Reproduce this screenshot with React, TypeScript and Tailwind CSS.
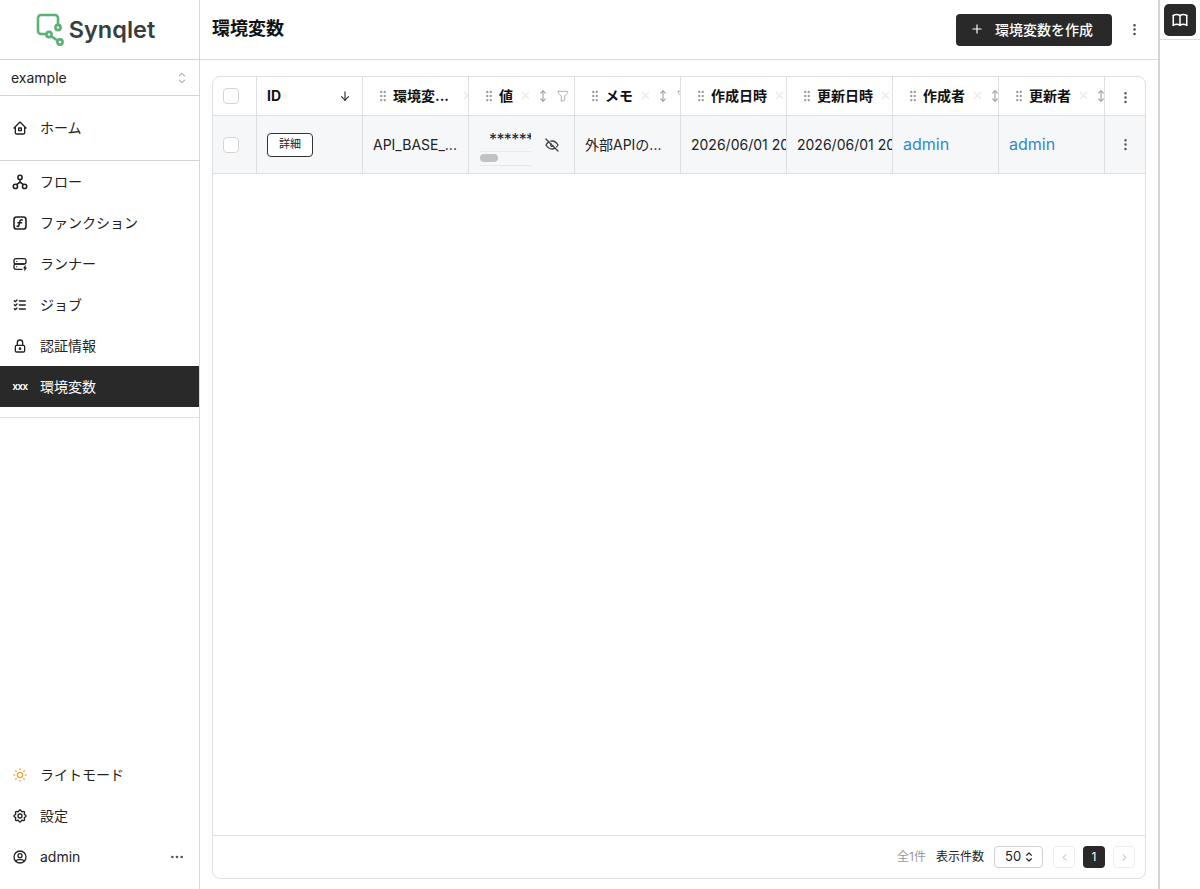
import { ReactNode } from 'react'
import {
  TbArrowDown,
  TbArrowsVertical,
  TbBook,
  TbChevronLeft,
  TbChevronRight,
  TbDots,
  TbDotsVertical,
  TbEyeOff,
  TbFilter,
  TbGripVertical,
  TbHome2,
  TbListCheck,
  TbLock,
  TbPlus,
  TbSelector,
  TbServerBolt,
  TbSettings,
  TbSun,
  TbUserCircle,
  TbX,
} from 'react-icons/tb'

const font = "font-['Inter','Noto_Sans_CJK_JP',sans-serif]"

const FlowIcon = () => (
  <svg width="16" height="16" viewBox="0 0 16 16" fill="none" stroke="currentColor" strokeWidth="1.6">
    <circle cx="8" cy="3.4" r="2.1" />
    <circle cx="3.4" cy="12.4" r="2.1" />
    <circle cx="12.6" cy="12.4" r="2.1" />
    <path d="M8 5.5 V8 M4.6 10.6 L8 8 L11.4 10.6" />
  </svg>
)

const FunctionIcon = () => (
  <svg width="16" height="16" viewBox="0 0 16 16" fill="none" stroke="currentColor" strokeWidth="1.6" strokeLinecap="round">
    <rect x="2" y="2" width="12" height="12" rx="2.6" />
    <path d="M10.2 5 C8.8 4.5 8 5.2 7.8 6.4 L7 10 C6.8 11.2 6 11.6 5.2 11.2 M6 7.8 H9.6" />
  </svg>
)

const NavItem = ({
  icon,
  label,
  active,
}: {
  icon: ReactNode
  label: string
  active?: boolean
}) => (
  <div
    className={`flex h-[41px] items-center px-3 text-[14px] ${
      active ? 'bg-[#292929] text-white' : 'text-[#222]'
    }`}
  >
    <span className="flex w-4 justify-center">{icon}</span>
    <span className="ml-3">{label}</span>
  </div>
)

const Logo = () => (
  <div className="flex h-[60px] items-center justify-center border-b border-[#d4d4d4] pr-2">
    <svg width="32" height="34" viewBox="0 0 32 34" fill="none" stroke="#5cb176" strokeWidth="2.6">
      <path d="M22 12 V5 a3 3 0 0 0 -3 -3 H5 a3 3 0 0 0 -3 3 V18 a3 3 0 0 0 3 3 H9" strokeLinecap="round" />
      <circle cx="22" cy="14.5" r="2.6" />
      <circle cx="13" cy="21.5" r="2.6" />
      <circle cx="24" cy="29" r="2.6" />
      <path d="M15.5 23.5 L21.5 27.5" />
    </svg>
    <span className="ml-px text-[23.5px] leading-none font-semibold text-[#353f42]">Synqlet</span>
  </div>
)

const Sidebar = () => (
  <aside className="flex h-full w-[200px] shrink-0 flex-col border-r border-[#d9d9d9]">
    <Logo />
    <div className="flex h-[36px] items-center justify-between border-b border-[#d4d4d4] pr-[9px] pl-[11px] text-[14px] text-[#222]">
      example
      <TbSelector size={16} strokeWidth={1.5} className="text-[#888]" />
    </div>
    <div className="flex h-[65px] flex-col justify-center border-b border-[#d4d4d4] pb-[1px]">
      <NavItem icon={<TbHome2 size={16} />} label="ホーム" />
    </div>
    <div className="border-b border-[#e0e0e0] pb-[10px]">
      <NavItem icon={<FlowIcon />} label="フロー" />
      <NavItem icon={<FunctionIcon />} label="ファンクション" />
      <NavItem icon={<TbServerBolt size={16} />} label="ランナー" />
      <NavItem icon={<TbListCheck size={16} />} label="ジョブ" />
      <NavItem icon={<TbLock size={16} />} label="認証情報" />
      <NavItem
        active
        icon={<span className="font-['Roboto',sans-serif] text-[11px] leading-none font-medium tracking-[-0.5px]">xxx</span>}
        label="環境変数"
      />
    </div>
    <div className="mt-auto pb-[12px]">
      <NavItem icon={<TbSun size={16} className="text-[#eda23a]" />} label="ライトモード" />
      <NavItem icon={<TbSettings size={16} />} label="設定" />
      <div className="flex h-[41px] items-center justify-between pr-3.5 pl-3 text-[14px] text-[#222]">
        <div className="flex items-center">
          <span className="flex w-4 justify-center">
            <TbUserCircle size={16} />
          </span>
          <span className="ml-3">admin</span>
        </div>
        <TbDots size={16} className="text-[#555]" />
      </div>
    </div>
  </aside>
)

const Checkbox = () => (
  <span className="block h-4 w-4 rounded-[4px] border border-[#d4d4d4] bg-white" />
)

const HeaderCell = ({
  label,
  sort,
  filter,
  truncated,
}: {
  label: string
  sort?: boolean
  filter?: boolean
  truncated?: boolean
}) => (
  <div className="flex h-full w-[106px] shrink-0 items-center overflow-hidden border-r border-[#dcdfe3] pb-[1px] pl-[13px]">
    <TbGripVertical size={14} className="shrink-0 text-[#999]" />
    <span className={`ml-[3px] shrink-0 text-[14px] font-bold text-[#111] ${truncated ? 'w-[62px]' : ''}`}>
      {label}
    </span>
    <TbX size={13} className="ml-1.5 shrink-0 text-[#e9e9e9]" />
    {sort && <TbArrowsVertical size={14} className="ml-1 shrink-0 text-[#a5a5a5]" />}
    {filter && <TbFilter size={14} strokeWidth={1.5} className="ml-1.5 shrink-0 text-[#a5a5a5]" />}
  </div>
)

const BodyCell = ({ children, link }: { children: ReactNode; link?: boolean }) => (
  <div
    className={`flex h-full w-[106px] shrink-0 items-center overflow-hidden border-r border-[#dcdfe3] pl-2.5 whitespace-nowrap ${
      link ? 'pb-[1px] text-[16px] text-[#2b8ccc]' : 'text-[14px] text-[#222]'
    }`}
  >
    {children}
  </div>
)

const Table = () => (
  <div className="min-h-0 flex-1 overflow-hidden">
    <div className="flex h-[39px] items-center border-b border-[#dcdfe3]">
      <div className="flex h-full w-[44px] shrink-0 items-center border-r border-[#dcdfe3] pl-2.5">
        <Checkbox />
      </div>
      <div className="flex h-full w-[106px] shrink-0 items-center justify-between border-r border-[#dcdfe3] pr-[10px] pb-[1px] pl-2.5 text-[14px] font-bold text-[#111]">
        ID
        <TbArrowDown size={14} className="text-[#333]" />
      </div>
      <HeaderCell label="環境変..." truncated />
      <HeaderCell label="値" sort filter />
      <HeaderCell label="メモ" sort filter />
      <HeaderCell label="作成日時" sort />
      <HeaderCell label="更新日時" sort />
      <HeaderCell label="作成者" sort />
      <HeaderCell label="更新者" sort />
      <div className="flex h-full flex-1 items-center justify-center pt-[3px]">
        <TbDotsVertical size={15} className="text-[#555]" />
      </div>
    </div>
    <div className="flex h-[58px] items-center border-b border-[#dcdfe3] bg-[#f6f7f9]">
      <div className="flex h-full w-[44px] shrink-0 items-center border-r border-[#dcdfe3] pl-2.5">
        <Checkbox />
      </div>
      <BodyCell>
        <span className="flex h-6 w-[46px] items-center justify-center rounded-[4px] border border-[#333] bg-white text-[11px] text-[#222]">
          詳細
        </span>
      </BodyCell>
      <BodyCell>API_BASE_...</BodyCell>
      <div className="flex h-full w-[106px] shrink-0 items-center border-r border-[#dcdfe3] pl-[11px]">
        <div className="w-[51px] overflow-hidden">
          <div className="h-[27px] overflow-hidden pt-1.5 pl-[9px] text-[16px] leading-[18px] tracking-[-0.6px] whitespace-nowrap text-[#222]">
            ********
          </div>
          <div className="flex h-[14px] items-center border-t border-[#e8e8e8]">
            <span className="block h-2 w-[18px] rounded-full bg-[#c2c2c2]" />
          </div>
          <div className="border-t border-[#e8e8e8]" />
        </div>
        <TbEyeOff size={16} className="ml-[13px] text-[#444]" />
      </div>
      <BodyCell>外部APIの...</BodyCell>
      <BodyCell>2026/06/01 20:00</BodyCell>
      <BodyCell>2026/06/01 20:00</BodyCell>
      <BodyCell link>admin</BodyCell>
      <BodyCell link>admin</BodyCell>
      <div className="flex h-full flex-1 items-center justify-center">
        <TbDotsVertical size={15} className="text-[#555]" />
      </div>
    </div>
  </div>
)

const Pagination = () => (
  <div className="flex h-[43px] shrink-0 items-center justify-end border-t border-[#dcdfe3] pr-[10px] text-[12px]">
    <span className="text-[#999]">全1件</span>
    <span className="ml-[10px] text-[#222]">表示件数</span>
    <div className="ml-[10px] flex h-[22px] w-[49px] items-center gap-px rounded-[4px] border border-[#cfcfcf] pl-[10px] text-[13px] text-[#222]">
      50
      <TbSelector size={14} />
    </div>
    <div className="ml-[10px] flex h-[22px] w-[22px] items-center justify-center rounded-[4px] border border-[#eee] text-[#aaa]">
      <TbChevronLeft size={11} />
    </div>
    <div className="ml-2 flex h-[22px] w-[22px] items-center justify-center rounded-[4px] bg-[#292929] text-white">
      1
    </div>
    <div className="ml-2 flex h-[22px] w-[22px] items-center justify-center rounded-[4px] border border-[#eee] text-[#aaa]">
      <TbChevronRight size={11} />
    </div>
  </div>
)

export default function App() {
  return (
    <div className={`flex h-[889px] w-[1200px] overflow-hidden bg-white ${font}`}>
      <Sidebar />
      <main className="flex h-full w-[958px] shrink-0 flex-col">
        <header className="flex h-[60px] shrink-0 items-center justify-between border-b border-[#d9d9d9] pr-[16px] pl-3">
          <h1 className="pb-0.5 text-[18px] font-bold text-[#111]">環境変数</h1>
          <div className="flex items-center">
            <button className="flex h-8 w-[156px] items-center rounded-[4px] bg-[#292929] pb-[1px] pl-[14px] text-[14px] font-medium text-white">
              <TbPlus size={14} className="mr-[11px]" />
              環境変数を作成
            </button>
            <TbDotsVertical size={15} className="ml-[15px] text-[#444]" />
          </div>
        </header>
        <div className="flex min-h-0 flex-1 px-3 pt-4 pb-[10px]">
          <div className="flex w-[934px] flex-col overflow-hidden rounded-lg border border-[#dcdfe3]">
            <Table />
            <Pagination />
          </div>
        </div>
      </main>
      <div className="h-full w-[42px] shrink-0 border-l-2 border-[#d4d4d4]">
        <div className="flex h-[40px] items-start justify-center border-b border-[#dcdcdc] pt-1">
          <div className="flex h-8 w-8 items-center justify-center rounded-[5px] bg-[#292929] text-white">
            <TbBook size={18} />
          </div>
        </div>
      </div>
    </div>
  )
}
